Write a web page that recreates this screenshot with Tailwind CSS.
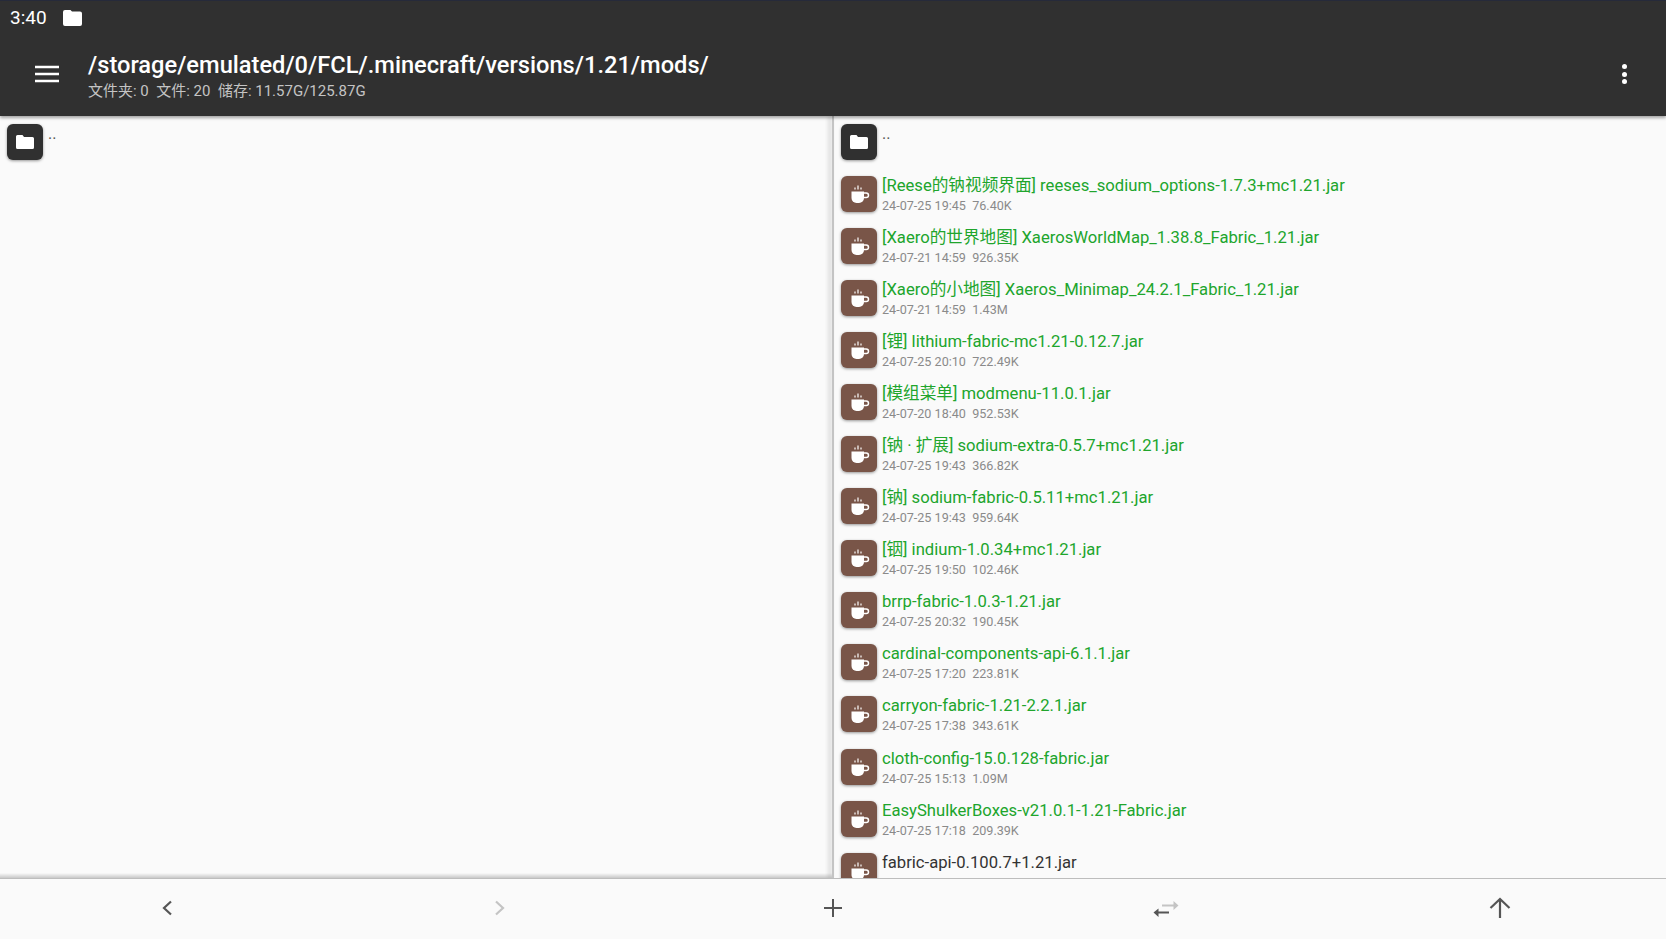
<!DOCTYPE html>
<html lang="en">
<head>
  <meta charset="UTF-8">
  <title>Mods - File Manager</title>
  <script src="https://cdn.jsdelivr.net/npm/@tailwindcss/browser@4"></script>
</head>
<body class="bg-[#fafafa] font-['Roboto','Noto_Sans_CJK_SC',sans-serif]">
  <div class="flex flex-col h-[939px] w-[1666px] overflow-hidden">
    <!-- Status bar + toolbar -->
    <header class="relative z-10 h-[116px] shrink-0 bg-[#303030] border-t border-[#262a3a] shadow-[0_2px_3px_rgba(0,0,0,0.35)]">
      <div class="flex items-center h-[33px] pl-[10px] gap-[16px] text-white">
        <span class="text-[19px] leading-none">3:40</span>
        <svg class="w-[19px] h-[16px]" viewBox="0 0 19 16"><path fill="#fff" d="M2 0h5.500l1.500 1.500h8a2 2 0 0 1 2 2V14a2 2 0 0 1-2 2H2a2 2 0 0 1-2-2V2a2 2 0 0 1 2-2z"/></svg>
      </div>
      <div class="flex items-center h-[82px] pb-[2px]">
        <div class="w-[88px] flex justify-center pl-[5px] shrink-0">
          <svg class="w-[26px] h-[18px]" viewBox="0 0 26 18"><path fill="none" stroke="#fff" stroke-width="2.400" d="M1 2h24M1 9h24M1 16h24"/></svg>
        </div>
        <div class="flex-1 pt-[2px]">
          <div class="text-white text-[23.650px] font-medium leading-[30px]">/storage/emulated/0/FCL/.minecraft/versions/1.21/mods/</div>
          <div class="text-[#c4c4c4] text-[15px] leading-[20px] mt-[1px] whitespace-pre">文件夹: 0  文件: 20  储存: 11.57G/125.87G</div>
        </div>
        <div class="w-[58px] pr-[25px] flex flex-col items-center gap-[2.500px] shrink-0">
          <span class="w-[5px] h-[5px] rounded-full bg-white"></span>
          <span class="w-[5px] h-[5px] rounded-full bg-white"></span>
          <span class="w-[5px] h-[5px] rounded-full bg-white"></span>
        </div>
      </div>
    </header>

    <!-- Panes -->
    <main class="flex flex-1 min-h-0">
      <section class="w-[832px] shrink-0 flex flex-col">
        <div class="flex flex-1 pt-[7.500px] pl-[7px]">
          <div class="w-[36px] h-[36px] rounded-[6px] bg-[#303030] shadow-[0_1px_3px_rgba(0,0,0,0.4)] flex items-center justify-center">
            <svg class="w-[18px] h-[14px]" viewBox="0 0 18 14"><path fill="#fff" d="M1.500 0h5L8 2h8.500A1.500 1.500 0 0 1 18 3.500V12.500A1.500 1.500 0 0 1 16.500 14H1.500A1.500 1.500 0 0 1 0 12.500V1.500A1.500 1.500 0 0 1 1.500 0z"/></svg>
          </div>
          <span class="ml-[5px] text-[16px] leading-[20px] text-[#555]">..</span>
        </div>
        <div class="h-[5px] shrink-0 bg-linear-to-b from-transparent to-black/20"></div>
      </section>
      <section class="w-[2px] shrink-0 bg-[#c4c4c4] shadow-[-3px_0_4px_rgba(0,0,0,0.22)]"></section>
      <section id="right-pane" class="flex-1 overflow-hidden pt-[7.500px] pl-[7px]">
        <div class="flex h-[52px]">
          <div class="w-[36px] h-[36px] rounded-[6px] bg-[#303030] shadow-[0_1px_3px_rgba(0,0,0,0.4)] flex items-center justify-center">
            <svg class="w-[18px] h-[14px]" viewBox="0 0 18 14"><path fill="#fff" d="M1.500 0h5L8 2h8.500A1.500 1.500 0 0 1 18 3.500V12.500A1.500 1.500 0 0 1 16.500 14H1.500A1.500 1.500 0 0 1 0 12.500V1.500A1.500 1.500 0 0 1 1.500 0z"/></svg>
          </div>
          <span class="ml-[5px] text-[16px] leading-[20px] text-[#555]">..</span>
        </div>
        <div id="file-list"></div>
      </section>
    </main>

    <!-- Bottom actions -->
    <nav class="relative z-10 grid grid-cols-5 h-[61px] shrink-0 bg-[#fafafa] border-t border-[#bdbdbd] pb-[3px]">
      <div class="flex items-center justify-center">
        <svg class="w-[12px] h-[16px]" viewBox="0 0 12 16"><path fill="none" stroke="#555" stroke-width="2.200" d="M10 1.500 3 8l7 6.500"/></svg>
      </div>
      <div class="flex items-center justify-center">
        <svg class="w-[12px] h-[16px]" viewBox="0 0 12 16"><path fill="none" stroke="#c4c4c4" stroke-width="2.200" d="m2 1.500 7 6.500-7 6.500"/></svg>
      </div>
      <div class="flex items-center justify-center">
        <svg class="w-[18px] h-[18px]" viewBox="0 0 18 18"><path fill="none" stroke="#555" stroke-width="2" d="M9 0v18M0 9h18"/></svg>
      </div>
      <div class="flex items-center justify-center">
        <svg class="w-[26px] h-[20px]" viewBox="0 0 26 20"><path fill="#c4c4c4" d="M9 6.500h11.500V3l5 4.500-5 4.500V8.500H9z"/><path fill="#555" d="M16 13.500H5.500V10.500L.5 14.500l5 4.500v-3.500H16z"/></svg>
      </div>
      <div class="flex items-center justify-center">
        <svg class="w-[22px] h-[22px] translate-x-[1px]" viewBox="0 0 22 22"><path fill="none" stroke="#555" stroke-width="2.200" d="M11 21V2M1.500 11 11 2l9.500 9"/></svg>
      </div>
    </nav>
  </div>

  <script>
    // Mods in the right pane, last one runs under the bottom bar
    const files = [
      ["[Reese的钠视频界面] reeses_sodium_options-1.7.3+mc1.21.jar", "24-07-25 19:45", "76.40K", true],
      ["[Xaero的世界地图] XaerosWorldMap_1.38.8_Fabric_1.21.jar", "24-07-21 14:59", "926.35K", true],
      ["[Xaero的小地图] Xaeros_Minimap_24.2.1_Fabric_1.21.jar", "24-07-21 14:59", "1.43M", true],
      ["[锂] lithium-fabric-mc1.21-0.12.7.jar", "24-07-25 20:10", "722.49K", true],
      ["[模组菜单] modmenu-11.0.1.jar", "24-07-20 18:40", "952.53K", true],
      ["[钠 · 扩展] sodium-extra-0.5.7+mc1.21.jar", "24-07-25 19:43", "366.82K", true],
      ["[钠] sodium-fabric-0.5.11+mc1.21.jar", "24-07-25 19:43", "959.64K", true],
      ["[铟] indium-1.0.34+mc1.21.jar", "24-07-25 19:50", "102.46K", true],
      ["brrp-fabric-1.0.3-1.21.jar", "24-07-25 20:32", "190.45K", true],
      ["cardinal-components-api-6.1.1.jar", "24-07-25 17:20", "223.81K", true],
      ["carryon-fabric-1.21-2.2.1.jar", "24-07-25 17:38", "343.61K", true],
      ["cloth-config-15.0.128-fabric.jar", "24-07-25 15:13", "1.09M", true],
      ["EasyShulkerBoxes-v21.0.1-1.21-Fabric.jar", "24-07-25 17:18", "209.39K", true],
      ["fabric-api-0.100.7+1.21.jar", "24-07-21 14:58", "2.47M", false]
    ];

    const cupIcon = `<svg class="w-[36px] h-[36px]" viewBox="0 0 36 36">
      <path fill="#fff" d="M10.500 15.500h12.500v6.500a5 5 0 0 1-5 5h-2.500a5 5 0 0 1-5-5z"/>
      <path fill="none" stroke="#fff" stroke-width="1.500" d="M23 17h2.200a2.200 2.200 0 0 1 0 4.600H22.500"/>
      <path fill="none" stroke="#fff" stroke-width="1.200" d="M14 11.500v2M17 9.500v4M20 11.500v2"/>
    </svg>`;

    document.getElementById("file-list").innerHTML = files.map(([name, date, size, active]) => `
      <div class="flex h-[52.100px]">
        <div class="w-[36px] h-[36px] shrink-0 rounded-[6px] bg-[#795548] shadow-[0_1px_3px_rgba(0,0,0,0.4)]">${cupIcon}</div>
        <div class="ml-[5px]">
          <div class="${active ? "text-[#20a52c]" : "text-[#333]"} text-[16.650px] leading-[20px] whitespace-pre">${name}</div>
          <div class="text-[#8a8a8a] text-[12.600px] leading-[18px] mt-[1px] whitespace-pre">${date}  ${size}</div>
        </div>
      </div>`).join("");
  </script>
</body>
</html>
